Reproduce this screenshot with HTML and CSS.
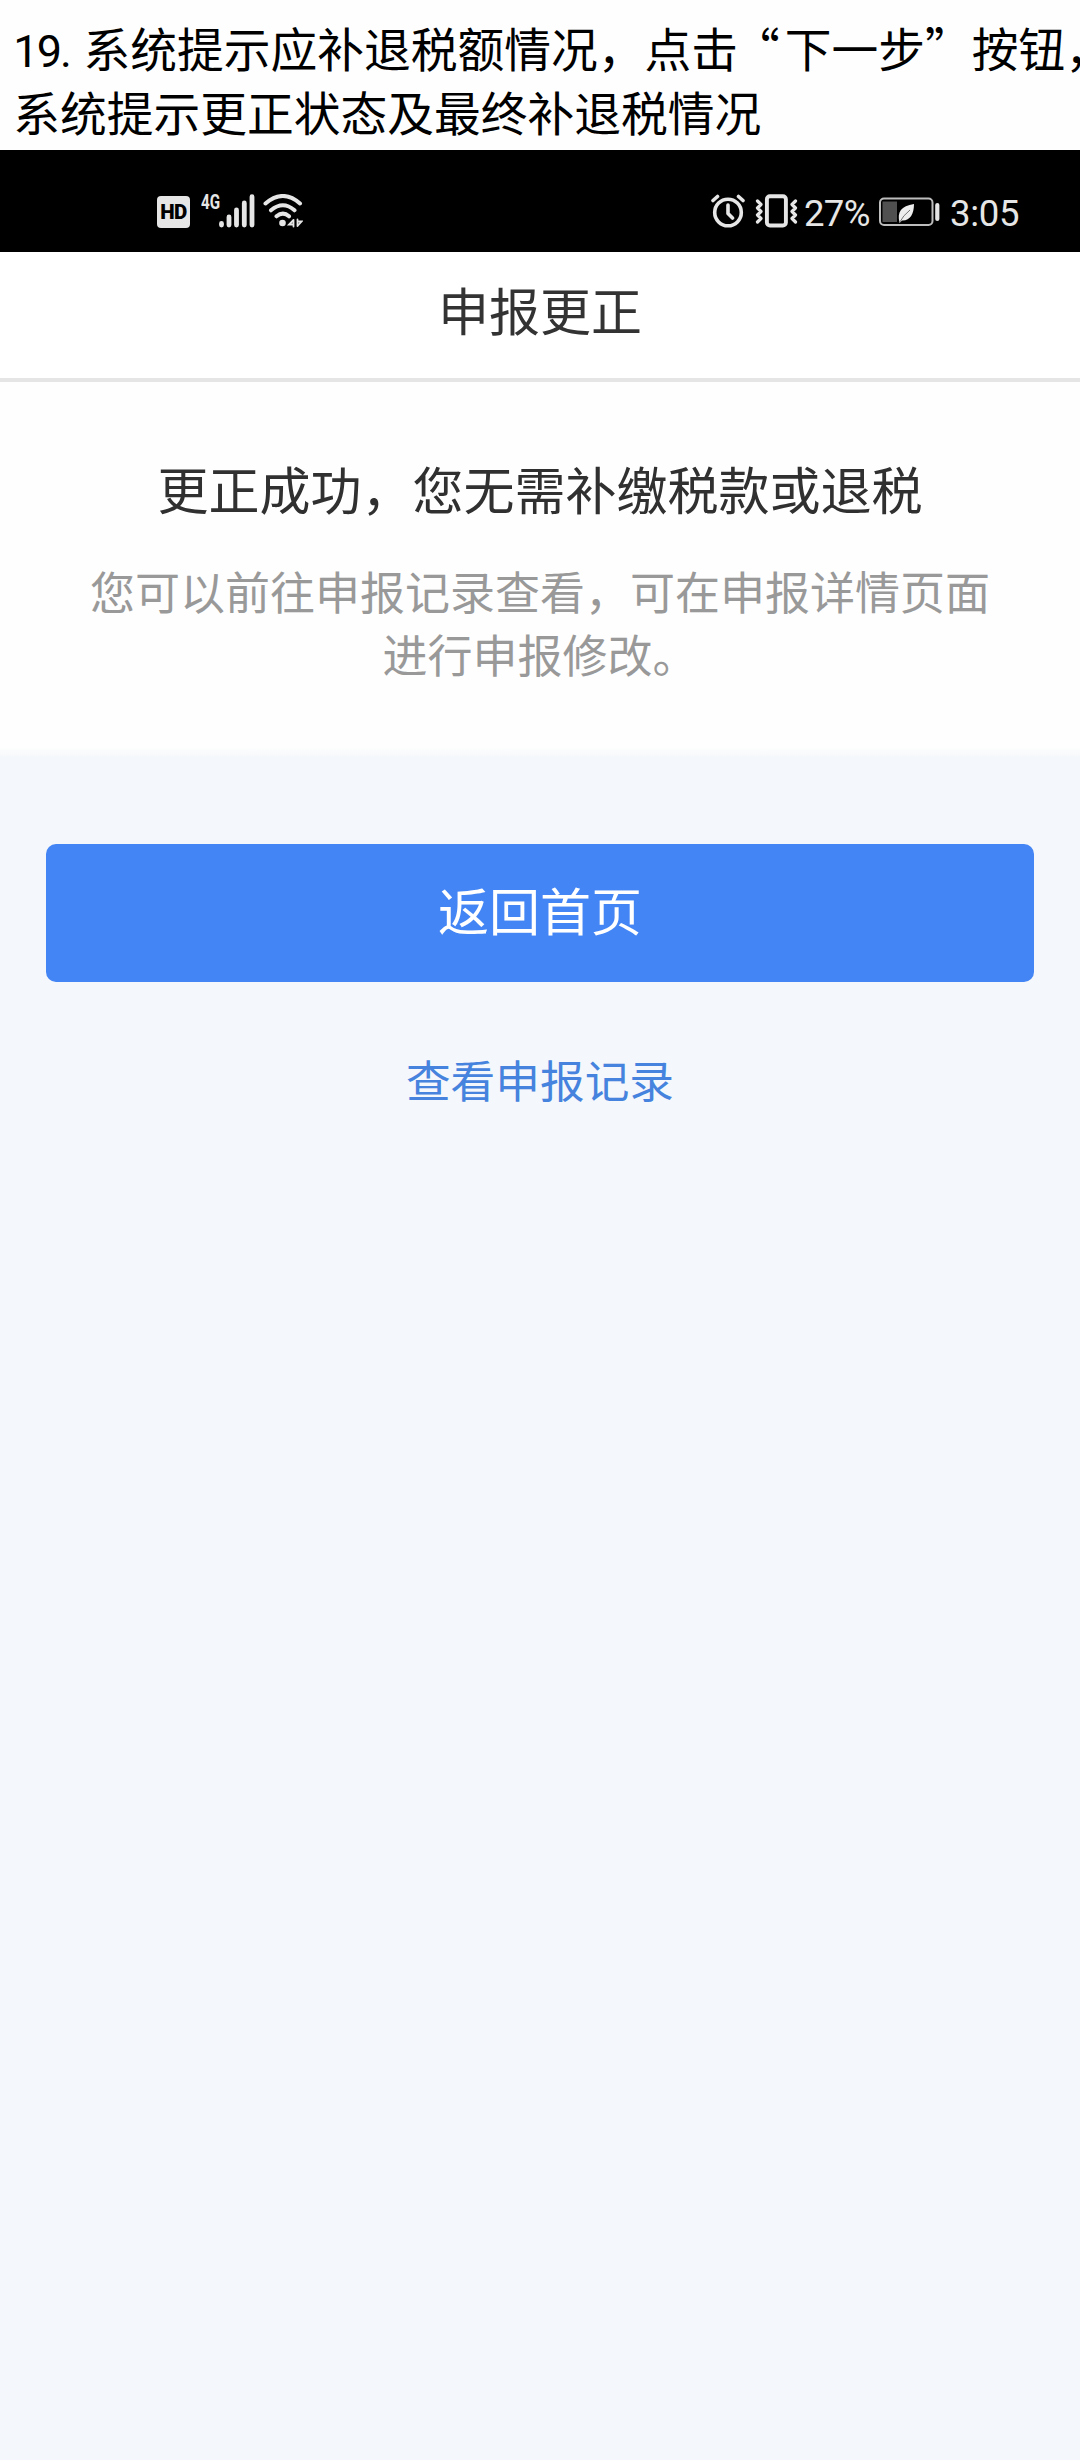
FILE: index.html
```html
<!DOCTYPE html>
<html lang="zh-CN">
<head>
<meta charset="utf-8">
<title>申报更正</title>
<link rel="stylesheet" href="styles.css">
</head>
<body>
<div class="caption">
  <p><span class="number"><span>1</span><span>9</span><span>.</span></span>系统提示应补退税额情况，点击<span class="quote">“</span>下一步”按钮，</p>
  <p>系统提示更正状态及最终补退税情况</p>
</div>
<div class="statusbar">
  <div class="status-left">
    <span class="hd">HD</span>
    <span class="net">4G</span>
    <svg class="signal" width="36" height="34" viewBox="0 0 36 34" stroke="#e6e6e6" stroke-width="4.800" stroke-linecap="round"><path d="M2.500 29.500v1.500M10 23v8M17.500 16v15M25.300 9v22M33 2.700v28.300"/></svg>
    <svg class="wifi" width="40" height="34" viewBox="0 0 40 34" fill="none" stroke="#e6e6e6" stroke-width="4" stroke-linecap="round"><path d="M2.500 9.500Q20-5.500 37 9.500M8 16.300Q20 6.300 31.500 16.300M13.500 22.300Q20 16.800 26 22.300"/><circle cx="19.500" cy="29" r="3.300" fill="#e6e6e6" stroke="none"/><path d="M30.500 26v6.500M30.500 26l-4.500 4.500h4.500M34.500 25.500v6.500M34.500 32l4-4.500h-4" stroke-width="1.800"/></svg>
  </div>
  <div class="status-right">
    <svg class="alarm" width="34" height="34" viewBox="0 0 34 34" fill="none" stroke="#e6e6e6" stroke-width="3.600" stroke-linecap="round" stroke-linejoin="round"><circle cx="17" cy="18.500" r="13.300"/><path d="M17 11v8.500l4.500 4.500M2 6.500l4.500-4M32 6.500l-4.500-4"/></svg>
    <svg class="vibrate" width="44" height="34" viewBox="0 0 44 34" fill="none" stroke="#e6e6e6" stroke-width="3.900" stroke-linecap="round" stroke-linejoin="round"><rect x="11.900" y="2.200" width="19" height="29.300" rx="3"/><path d="M2.500 7l3.500 3.500-3.500 3.500 3.500 3.500-3.500 3.500 3.500 3.500-3.500 3.500M40.500 7L37 10.500l3.500 3.500-3.500 3.500 3.500 3.500-3.500 3.500 3.500 3.500" stroke-width="3.200"/></svg>
    <span class="percent">27%</span>
    <svg class="battery" width="62" height="30" viewBox="0 0 62 30"><rect x="1" y="1.500" width="52.500" height="26.500" rx="4" fill="none" stroke="#bdbdbd" stroke-width="2"/><rect x="3.500" y="4.500" width="14.500" height="20.500" fill="#505050"/><path d="M20.500 25.500C18 15 22 9 35 7C35 17 31 24 23 23.500L20.500 26Z" fill="#eee"/><path d="M20.500 25.500Q24 18.500 31 13" stroke="#777" fill="none"/><path d="M58.300 8v14" stroke="#e6e6e6" stroke-width="4.200" stroke-linecap="round"/></svg>
    <span class="clock">3:05</span>
  </div>
</div>
<header class="navbar">申报更正</header>
<main>
  <section class="result">
    <h1>更正成功，您无需补缴税款或退税</h1>
    <p>您可以前往申报记录查看，可在申报详情页面<br>进行申报修改。</p>
  </section>
  <div class="actions">
    <button class="home">返回首页</button>
    <a class="records">查看申报记录</a>
  </div>
</main>
</body>
</html>
```
FILE: styles.css
```css
* { box-sizing: border-box; }
body {
  margin: 0;
  min-height: 2460px;
  display: flex;
  flex-direction: column;
  background: #f4f7fb;
  font-family: "Noto Sans CJK SC", sans-serif;
  overflow-x: hidden;
}
p, h1 { margin: 0; font-weight: 400; }
.caption {
  height: 150px;
  padding: 15px 0 0 13.3px;
  background: #fefefe;
  color: #000;
  font-size: 46.75px;
  line-height: 64px;
  white-space: nowrap;
  overflow: hidden;
}
.caption p { height: 64px; }
.number {
  display: inline-flex;
  width: 70.2px;
  font-family: Roboto, sans-serif;
  font-size: 45px;
}
.number span { width: 23.4px; }
.quote { margin: 0 5px 0 -5px; }
.statusbar {
  height: 102px;
  padding: 0 62px 0 157px;
  background: #000;
  color: #e6e6e6;
  display: flex;
  justify-content: space-between;
  align-items: center;
  font-family: Roboto, sans-serif;
}
.status-left, .status-right {
  display: flex;
  align-items: flex-start;
  height: 34px;
  margin-top: 20px;
}
.hd {
  width: 33px;
  height: 32px;
  margin-top: 2px;
  border-radius: 4px;
  background: #e6e6e6;
  color: #000;
  font-size: 20.5px;
  font-weight: 900;
  line-height: 32px;
  text-align: center;
  letter-spacing: -0.5px;
}
.net {
  width: 18px;
  margin-left: 11px;
  font-size: 20px;
  font-weight: 700;
  line-height: 16px;
  transform: scaleX(0.76);
  transform-origin: left;
}
.wifi { margin-left: 8px; }
.vibrate { margin-left: 10px; }
.percent, .clock {
  font-size: 36.5px;
  line-height: 39px;
}
.percent { width: 66px; margin-left: 5px; letter-spacing: -0.7px; }
.battery { margin: 3px 0 0 9px; }
.clock { width: 68px; margin-left: 9px; letter-spacing: -0.3px; }
.navbar {
  height: 130px;
  border-bottom: 4px solid #e5e5e5;
  background: #fff;
  color: #333;
  font-size: 51px;
  line-height: 115px;
  text-align: center;
}
.result {
  height: 376px;
  padding-top: 69px;
  background: linear-gradient(#fefefe 365px, #f4f7fb);
  text-align: center;
}
.result h1 {
  color: #303030;
  font-size: 51px;
  line-height: 74px;
}
.result p {
  margin-top: 34px;
  color: #999;
  font-size: 45px;
  line-height: 63px;
}
.actions {
  display: flex;
  flex-direction: column;
  align-items: center;
  padding: 86px 46px 0;
}
.home {
  width: 100%;
  height: 138px;
  padding: 0 0 8px;
  border: 0;
  border-radius: 10px;
  background: #4385f4;
  color: #fff;
  font: 400 51px/130px "Noto Sans CJK SC", sans-serif;
}
.records {
  margin-top: 64px;
  color: #4583de;
  font-size: 44.7px;
  line-height: 66px;
}
```
